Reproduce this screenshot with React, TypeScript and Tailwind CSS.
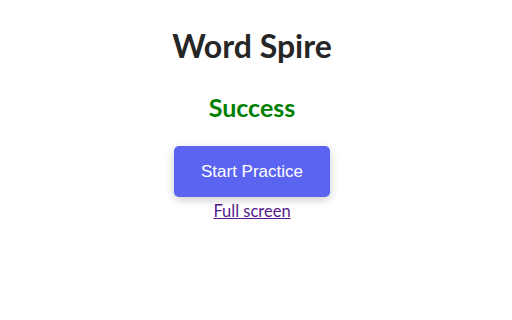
export default function App() {
  return (
    <div className="flex min-h-[320px] w-[512px] flex-col items-center bg-white pr-2 font-['Lato','Noto_Sans',sans-serif]">
      <h1 className="mt-[22px] text-[32px] font-bold leading-[48px] text-[#262626]">Word Spire</h1>
      <h2 className="mt-[21px] text-[25px] font-bold leading-[32px] text-[#008000]">Success</h2>
      <button
        type="button"
        className="mt-[23px] h-[51px] w-[156px] rounded-[5px] bg-[#5b64f0] font-['Liberation_Sans',Arial,sans-serif] text-[17px] text-white shadow-[0_3px_10px_rgba(0,0,0,0.2)]"
      >
        Start Practice
      </button>
      <a href="#" className="mt-[2px] text-[16.5px] leading-[24px] text-[#551a8b] underline">
        Full screen
      </a>
    </div>
  );
}
